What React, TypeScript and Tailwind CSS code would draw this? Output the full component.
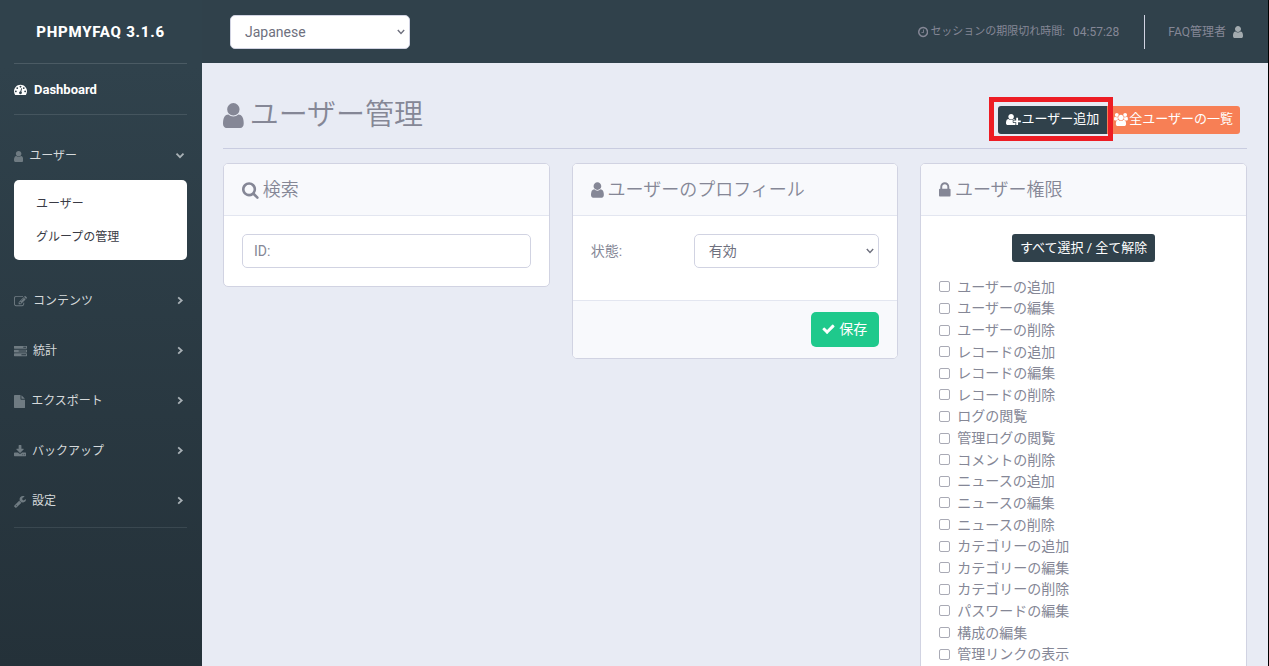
import type { ComponentProps } from 'react';
import { clsx } from 'clsx';

interface Glyph {
  viewBox: string;
  path: string;
}

const GLYPHS = {
  user: {
    viewBox: '256 0 1280 1792',
    path: 'M1536 1399q0 109-62.5 187t-150.5 78h-854q-88 0-150.5-78t-62.5-187q0-85 8.5-160.5t31.5-152 58.5-131 94-89 134.5-34.5q131 128 313 128t313-128q76 0 134.5 34.5t94 89 58.5 131 31.5 152 8.5 160.5zm-256-887q0 159-112.5 271.5t-271.5 112.5-271.5-112.5-112.5-271.5 112.5-271.5 271.5-112.5 271.5 112.5 112.5 271.5z',
  },
  check: {
    viewBox: '64 0 1664 1792',
    path: 'M1671 566q0 40-28 68l-724 724-136 136q-28 28-68 28t-68-28l-136-136-362-362q-28-28-28-68t28-68l136-136q28-28 68-28t68 28l294 295 656-657q28-28 68-28t68 28l136 136q28 28 28 68z',
  },
  search: {
    viewBox: '64 0 1664 1792',
    path: 'M1216 832q0-185-131.5-316.5t-316.5-131.5-316.5 131.5-131.5 316.5 131.5 316.5 316.5 131.5 316.5-131.5 131.5-316.5zm512 832q0 52-38 90t-90 38q-54 0-90-38l-343-342q-179 124-399 124-143 0-273.5-55.5t-225-150-150-225-55.5-273.5 55.5-273.5 150-225 225-150 273.5-55.5 273.5 55.5 225 150 150 225 55.5 273.5q0 220-124 399l343 343q37 37 37 90z',
  },
  lock: {
    viewBox: '320 0 1152 1792',
    path: 'M640 768h512v-192q0-106-75-181t-181-75-181 75-75 181v192zm832 96v576q0 40-28 68t-68 28h-960q-40 0-68-28t-28-68v-576q0-40 28-68t68-28h32v-192q0-184 132-316t316-132 316 132 132 316v192h32q40 0 68 28t28 68z',
  },
  clock: {
    viewBox: '128 0 1536 1792',
    path: 'M1024 544v448q0 14-9 23t-23 9h-320q-14 0-23-9t-9-23v-64q0-14 9-23t23-9h224v-352q0-14 9-23t23-9h64q14 0 23 9t9 23zm416 352q0-148-73-273t-198-198-273-73-273 73-198 198-73 273 73 273 198 198 273 73 273-73 198-198 73-273zm224 0q0 209-103 385.5t-279.5 279.5-385.5 103-385.5-103-279.5-279.5-103-385.5 103-385.5 279.5-279.5 385.5-103 385.5 103 279.5 279.5 103 385.5z',
  },
  dashboard: {
    viewBox: '0 0 1792 1792',
    path: 'M384 1152q0-53-37.5-90.5t-90.5-37.5-90.5 37.5-37.5 90.5 37.5 90.5 90.5 37.5 90.5-37.5 37.5-90.5zm192-448q0-53-37.5-90.5t-90.5-37.5-90.5 37.5-37.5 90.5 37.5 90.5 90.5 37.5 90.5-37.5 37.5-90.5zm428 481l101-382q6-26-7.5-48.5t-38.5-29.5-48 6.5-30 39.5l-101 382q-60 5-107 43.5t-63 98.5q-20 77 20 146t117 89 146-20 89-117q16-60-6-117t-72-91zm660-33q0-53-37.5-90.5t-90.5-37.5-90.5 37.5-37.5 90.5 37.5 90.5 90.5 37.5 90.5-37.5 37.5-90.5zm-640-640q0-53-37.5-90.5t-90.5-37.5-90.5 37.5-37.5 90.5 37.5 90.5 90.5 37.5 90.5-37.5 37.5-90.5zm448 192q0-53-37.5-90.5t-90.5-37.5-90.5 37.5-37.5 90.5 37.5 90.5 90.5 37.5 90.5-37.5 37.5-90.5zm320 448q0 261-141 483-19 29-54 29h-1402q-35 0-54-29-141-221-141-483 0-182 71-348t191-286 286-191 348-71 348 71 286 191 191 286 71 348z',
  },
  userPlus: {
    viewBox: '0 0 2048 1792',
    path: 'M704 896q-159 0-271.5-112.5t-112.5-271.5 112.5-271.5 271.5-112.5 271.5 112.5 112.5 271.5-112.5 271.5-271.5 112.5zm960 128h352q13 0 22.5 9.5t9.5 22.5v192q0 13-9.5 22.5t-22.5 9.5h-352v352q0 13-9.5 22.5t-22.5 9.5h-192q-13 0-22.5-9.5t-9.5-22.5v-352h-352q-13 0-22.5-9.5t-9.5-22.5v-192q0-13 9.5-22.5t22.5-9.5h352v-352q0-13 9.5-22.5t22.5-9.5h192q13 0 22.5 9.5t9.5 22.5v352zm-736 224q0 52 38 90t90 38h256v238q-68 50-171 50h-874q-121 0-194-69t-73-190q0-53 3.5-103.5t14-109 26.5-108.5 43-97.5 62-81 85.5-53.5 111.5-20q19 0 39 17 79 61 154.5 91.5t164.5 30.5 164.5-30.5 154.5-91.5q20-17 39-17 132 0 217 96h-223q-52 0-90 38t-38 90v192z',
  },
  users: {
    viewBox: '-64 0 1920 1792',
    path: 'M529 896q-162 5-265 128h-134q-82 0-138-40.5t-56-118.5q0-353 124-353 6 0 43.5 21t97.5 42.5 119 21.5q67 0 133-23-5 37-5 66 0 139 81 256zm1071 637q0 120-73 189.5t-194 69.5h-874q-121 0-194-69.5t-73-189.5q0-53 3.5-103.5t14-109 26.5-108.5 43-97.5 62-81 85.5-53.5 111.5-20q10 0 43 21.5t73 48 107 48 135 21.5 135-21.5 107-48 73-48 43-21.5q61 0 111.5 20t85.5 53.5 62 81 43 97.5 26.5 108.5 14 109 3.5 103.5zm-1024-1277q0 106-75 181t-181 75-181-75-75-181 75-181 181-75 181 75 75 181zm704 384q0 159-112.5 271.5t-271.5 112.5-271.5-112.5-112.5-271.5 112.5-271.5 271.5-112.5 271.5 112.5 112.5 271.5zm576 225q0 78-56 118.5t-138 40.5h-134q-103-123-265-128 81-117 81-256 0-29-5-66 66 23 133 23 59 0 119-21.5t97.5-42.5 43.5-21q124 0 124 353zm-128-609q0 106-75 181t-181 75-181-75-75-181 75-181 181-75 181 75 75 181z',
  },
  edit: {
    viewBox: '0 0 1792 1792',
    path: 'M888 1184l116-116-152-152-116 116v56h96v96h56zm440-720q-16-16-33 1l-350 350q-17 17-1 33t33-1l350-350q17-17 1-33zm80 594v190q0 119-84.5 203.5t-203.5 84.5h-832q-119 0-203.5-84.5t-84.5-203.5v-832q0-119 84.5-203.5t203.5-84.5h832q63 0 117 25 15 7 18 23 3 17-9 29l-49 49q-14 14-32 8-23-6-45-6h-832q-66 0-113 47t-47 113v832q0 66 47 113t113 47h832q66 0 113-47t47-113v-126q0-13 9-22l64-64q15-15 35-7t20 29zm-96-738l288 288-672 672h-288v-288zm444 132l-92 92-288-288 92-92q28-28 68-28t68 28l152 152q28 28 28 68t-28 68z',
  },
  tasks: {
    viewBox: '0 0 1792 1792',
    path: 'M1024 1408h640v-128h-640v128zm-384-512h1024v-128h-1024v128zm640-512h384v-128h-384v128zm512 832v256q0 26-19 45t-45 19h-1664q-26 0-45-19t-19-45v-256q0-26 19-45t45-19h1664q26 0 45 19t19 45zm0-512v256q0 26-19 45t-45 19h-1664q-26 0-45-19t-19-45v-256q0-26 19-45t45-19h1664q26 0 45 19t19 45zm0-512v256q0 26-19 45t-45 19h-1664q-26 0-45-19t-19-45v-256q0-26 19-45t45-19h1664q26 0 45 19t19 45z',
  },
  file: {
    viewBox: '128 0 1536 1792',
    path: 'M1152 512v-472q22 14 36 28l408 408q14 14 28 36h-472zm-128 32q0 40 28 68t68 28h544v1056q0 40-28 68t-68 28h-1344q-40 0-68-28t-28-68v-1600q0-40 28-68t68-28h800v544z',
  },
  download: {
    viewBox: '64 0 1664 1792',
    path: 'M1344 1344q0-26-19-45t-45-19-45 19-19 45 19 45 45 19 45-19 19-45zm256 0q0-26-19-45t-45-19-45 19-19 45 19 45 45 19 45-19 19-45zm128-224v320q0 40-28 68t-68 28h-1472q-40 0-68-28t-28-68v-320q0-40 28-68t68-28h465l135 136q58 56 136 56t136-56l136-136h464q40 0 68 28t28 68zm-325-569q17 41-14 70l-448 448q-18 19-45 19t-45-19l-448-448q-31-29-14-70 17-39 59-39h256v-448q0-26 19-45t45-19h256q26 0 45 19t19 45v448h256q42 0 59 39z',
  },
  wrench: {
    viewBox: '64 0 1664 1792',
    path: 'M448 1472q0-26-19-45t-45-19-45 19-19 45 19 45 45 19 45-19 19-45zm644-420l-682 682q-37 37-90 37-52 0-91-37l-106-108q-38-36-38-90 0-53 38-91l681-681q39 98 114.5 173.5t173.5 114.5zm634-435q0 39-23 106-47 134-164.5 217.5t-258.5 83.5q-185 0-316.5-131.5t-131.5-316.5 131.5-316.5 316.5-131.5q58 0 121.5 16.5t107.5 46.5q16 11 16 28t-16 28l-293 169v224l193 107q5-3 79-48.5t135.5-81 70.5-35.5q15 0 23.5 10t8.5 25z',
  },
} satisfies Record<string, Glyph>;

type IconName = keyof typeof GLYPHS;

function Icon({ name, className }: { name: IconName; className?: string }) {
  const glyph = GLYPHS[name];
  return (
    <svg viewBox={glyph.viewBox} fill="currentColor" aria-hidden="true" className={clsx('w-auto shrink-0', className)}>
      <path d={glyph.path} />
    </svg>
  );
}

function Chevron({ open }: { open?: boolean }) {
  return (
    <svg viewBox="0 0 10 10" fill="none" stroke="currentColor" strokeWidth="1.8" aria-hidden="true" className="h-[10px] w-[10px] text-[#a9b1b6]">
      <path d={open ? 'M1.5 2.7 5 6.2 8.5 2.7' : 'M3.2 1.3 6.7 4.5 3.2 7.7'} />
    </svg>
  );
}

// Native select with its own thin arrow laid over the right edge
function SelectBox({ className, ...props }: ComponentProps<'select'>) {
  return (
    <div className={clsx('relative', className)}>
      <select
        {...props}
        className="h-[34px] w-full appearance-none rounded-[5px] border border-[#d1d3e2] bg-white px-[14px] text-sm text-[#6e707e]"
      />
      <svg
        viewBox="0 0 8 6"
        fill="none"
        stroke="#6e707e"
        strokeWidth="1.4"
        aria-hidden="true"
        className="pointer-events-none absolute top-[14px] right-[5px] h-[6px] w-[8px]"
      >
        <path d="M.8 1 4 4.4 7.2 1" />
      </svg>
    </div>
  );
}

const MENU: { icon: IconName; label: string; children?: string[] }[] = [
  { icon: 'user', label: 'ユーザー', children: ['ユーザー', 'グループの管理'] },
  { icon: 'edit', label: 'コンテンツ' },
  { icon: 'tasks', label: '統計' },
  { icon: 'file', label: 'エクスポート' },
  { icon: 'download', label: 'バックアップ' },
  { icon: 'wrench', label: '設定' },
];

const PERMISSIONS = [
  'ユーザーの追加',
  'ユーザーの編集',
  'ユーザーの削除',
  'レコードの追加',
  'レコードの編集',
  'レコードの削除',
  'ログの閲覧',
  '管理ログの閲覧',
  'コメントの削除',
  'ニュースの追加',
  'ニュースの編集',
  'ニュースの削除',
  'カテゴリーの追加',
  'カテゴリーの編集',
  'カテゴリーの削除',
  'パスワードの編集',
  '構成の編集',
  '管理リンクの表示',
];

function Sidebar() {
  return (
    <nav className="w-[202px] shrink-0 bg-linear-to-b from-[#30424c] from-10% to-[#243139] px-[14px] pr-[15px] text-xs">
      <a href="#" className="flex h-[63px] items-center justify-center pt-[2px] text-[15px] font-extrabold tracking-wider text-white uppercase">
        phpMyFAQ 3.1.6
      </a>
      <hr className="border-[#4b5b64]" />
      <a href="#" className="flex h-[50px] items-center gap-[7px] pt-px text-[13px] font-bold text-white">
        <Icon name="dashboard" className="h-[13px]" />
        Dashboard
      </a>
      <hr className="mb-[15px] border-[#45555e]" />
      {MENU.map((item) => (
        <div key={item.label}>
          <button type="button" aria-expanded={!!item.children} className="flex h-[50px] w-full items-center gap-[6px] pt-[2px] text-[#d5d9db]">
            <Icon name={item.icon} className="h-[13px] text-[#6f7b82]" />
            <span className="grow text-left">{item.label}</span>
            <span className="pr-[2px]">
              <Chevron open={!!item.children} />
            </span>
          </button>
          {item.children && (
            <div className="mb-[15px] rounded-[5px] bg-white px-[22px] py-[7px] text-[#3a3b45]">
              {item.children.map((child) => (
                <a key={child} href="#" className="flex h-[33px] items-center">
                  {child}
                </a>
              ))}
            </div>
          )}
        </div>
      ))}
      <hr className="mt-[2px] border-[#3a4850]" />
    </nav>
  );
}

function Topbar() {
  return (
    <header className="flex h-[63px] shrink-0 items-center justify-between bg-[#30414b] pr-[25px] pl-7 text-xs text-[#858796]">
      <SelectBox aria-label="Language" className="w-[180px]">
        <option>Japanese</option>
      </SelectBox>
      <div className="flex h-[34px] items-center">
        <Icon name="clock" className="mr-[2px] h-3" />
        <span className="mr-2 pt-[2px] text-[11px]">セッションの期限切れ時間:</span>
        <span>04:57:28</span>
        <div className="mr-[23px] ml-[25px] h-full w-px bg-[#d1d3e2]" />
        <a href="#" className="flex items-center gap-[7px]">
          FAQ管理者
          <Icon name="user" className="h-[14px] text-[#a3abaf]" />
        </a>
      </div>
    </header>
  );
}

function CardTitle({ icon, children }: { icon: IconName; children: string }) {
  return (
    <h5 className="flex h-[52px] items-center gap-1 border-b border-[#e3e6f0] bg-[#f8f9fc] px-[18px] text-lg font-[350]">
      <Icon name={icon} className="h-[18px]" />
      {children}
    </h5>
  );
}

export default function App() {
  return (
    <div className="flex h-screen overflow-hidden border-r border-black font-['Roboto','Noto_Sans_CJK_JP',sans-serif] text-sm text-[#858796]">
      <Sidebar />
      <div className="flex min-w-0 grow flex-col bg-[#e8ebf4]">
        <Topbar />
        <main className="min-h-0 grow overflow-hidden px-[21px]">
          <div className="mb-[14px] flex h-[86px] items-center justify-between border-b border-[#c9cce0] pt-5">
            <h2 className="flex items-center gap-1.5 text-[29px] font-[350]">
              <Icon name="user" className="h-[29px]" />
              ユーザー管理
            </h2>
            <div className="mt-2 mr-[7px] flex text-[13px] text-white">
              <div className="relative">
                <a href="#" className="flex h-7 items-center gap-px rounded-l-[3px] bg-[#30414b] px-2">
                  <Icon name="userPlus" className="h-[13px]" />
                  ユーザー追加
                </a>
                <div className="pointer-events-none absolute -top-[9px] -right-[6px] -bottom-[7px] -left-[9px] border-[5px] border-[#ed1c24]" />
              </div>
              <a href="#" className="flex h-7 items-center gap-px rounded-r-[3px] bg-[#f77f55] px-[7px]">
                <Icon name="users" className="h-[13px]" />
                全ユーザーの一覧
              </a>
            </div>
          </div>

          <div className="grid grid-cols-3 items-start gap-[22px]">
            <section className="overflow-hidden rounded-[5px] border border-[#d1d3e2] bg-white">
              <CardTitle icon="search">検索</CardTitle>
              <div className="p-[18px]">
                <input
                  type="text"
                  aria-label="ID"
                  placeholder="ID:"
                  className="block h-[34px] w-full rounded-[5px] border border-[#d1d3e2] px-[11px] placeholder:text-[#858796]"
                />
              </div>
            </section>

            <section className="overflow-hidden rounded-[5px] border border-[#d1d3e2] bg-white">
              <CardTitle icon="user">ユーザーのプロフィール</CardTitle>
              <div className="flex items-center px-[18px] pt-[18px] pb-8">
                <label htmlFor="user-status" className="w-[103px]">
                  状態:
                </label>
                <SelectBox id="user-status" className="grow">
                  <option>有効</option>
                </SelectBox>
              </div>
              <div className="flex justify-end border-t border-[#e3e6f0] bg-[#f8f9fc] px-[18px] py-[11px]">
                <button type="submit" className="flex h-[35px] items-center gap-1 rounded-[5px] bg-[#1fc98c] pr-3 pb-px pl-[11px] text-white">
                  <Icon name="check" className="h-[14px]" />
                  保存
                </button>
              </div>
            </section>

            <section className="overflow-hidden rounded-[5px] border border-[#d1d3e2] bg-white">
              <CardTitle icon="lock">ユーザー権限</CardTitle>
              <div className="p-[18px]">
                <button type="button" className="mx-auto mb-[14px] flex h-7 items-center rounded-[3px] bg-[#30414b] px-2 text-[13px] text-white">
                  すべて選択 / 全て解除
                </button>
                <ul className="grid h-[389px] auto-rows-fr">
                  {PERMISSIONS.map((permission) => (
                    <li key={permission} className="flex items-center">
                      <label className="flex items-center gap-[7px]">
                        <input type="checkbox" className="h-[11px] w-[11px] appearance-none rounded-[2px] border border-[#a9aab5] bg-white" />
                        {permission}
                      </label>
                    </li>
                  ))}
                </ul>
              </div>
            </section>
          </div>
        </main>
      </div>
    </div>
  );
}
